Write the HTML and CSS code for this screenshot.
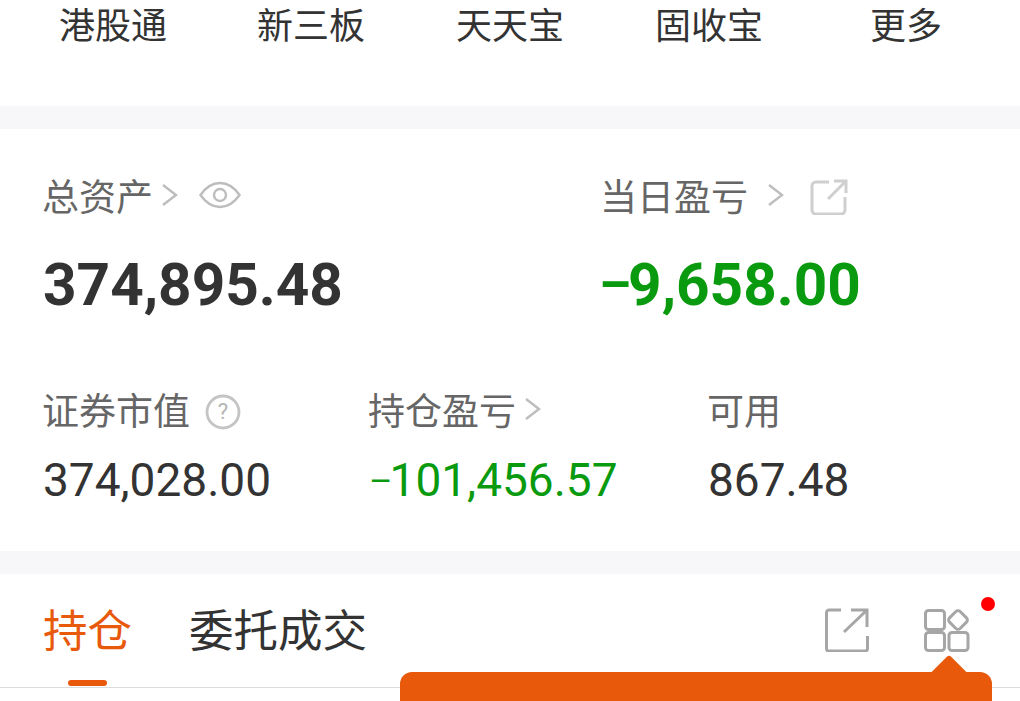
FILE: index.html
```html
<!DOCTYPE html>
<html lang="zh">
<head>
<meta charset="utf-8">
<title>持仓</title>
<link rel="stylesheet" href="styles.css">
</head>
<body>
<nav class="nav">
  <span class="nav-item">港股通</span>
  <span class="nav-item">新三板</span>
  <span class="nav-item">天天宝</span>
  <span class="nav-item">固收宝</span>
  <span class="nav-item">更多</span>
</nav>
<section class="summary">
  <div class="hero">
    <div class="hero-col">
      <div class="label-row">
        <span class="label">总资产</span>
        <svg class="chev" width="18" height="26" viewBox="0 0 18 26"><path d="M2 3l13 10L2 23" fill="none" stroke="#bdbdbd" stroke-width="2.400"/></svg>
        <svg class="eye" width="42" height="28" viewBox="0 0 42 28"><path d="M1.500 14C7 6 13.500 2 21 2s14 4 19.500 12C35 22 28.500 26 21 26S7 22 1.500 14z" fill="none" stroke="#bdbdbd" stroke-width="2.400"/><circle cx="21" cy="14" r="6" fill="none" stroke="#bdbdbd" stroke-width="2.400"/></svg>
      </div>
      <div class="big">374,895.48</div>
    </div>
    <div class="hero-col hero-right">
      <div class="label-row">
        <span class="label">当日盈亏</span>
        <svg class="chev chev-wide" width="18" height="26" viewBox="0 0 18 26"><path d="M2 3l13 10L2 23" fill="none" stroke="#bdbdbd" stroke-width="2.400"/></svg>
        <svg class="share" width="38" height="36" viewBox="0 0 38 36"><path d="M19 3H6a4 4 0 0 0-4 4v24a4 4 0 0 0 4 4h25a4 4 0 0 0 4-4V18" fill="none" stroke="#cfcfcf" stroke-width="3"/><path d="M18 20L35 3M24 2h12v12" fill="none" stroke="#cfcfcf" stroke-width="3"/></svg>
      </div>
      <div class="big green"><span class="dash">–</span>9,658.00</div>
    </div>
  </div>
  <div class="stats">
    <div class="stat stat-a">
      <div class="label-row">
        <span class="label">证券市值</span>
        <svg class="help" width="36" height="36" viewBox="0 0 36 36"><circle cx="18" cy="18" r="16" fill="none" stroke="#c4c4c4" stroke-width="2.800"/><text x="18" y="25" text-anchor="middle" class="help-q">?</text></svg>
      </div>
      <div class="mid">374,028.00</div>
    </div>
    <div class="stat stat-b">
      <div class="label-row">
        <span class="label">持仓盈亏</span>
        <svg class="chev" width="18" height="26" viewBox="0 0 18 26"><path d="M2 3l13 10L2 23" fill="none" stroke="#bdbdbd" stroke-width="2.400"/></svg>
      </div>
      <div class="mid green"><span class="dash">–</span>101,456.57</div>
    </div>
    <div class="stat">
      <div class="label-row">
        <span class="label">可用</span>
      </div>
      <div class="mid">867.48</div>
    </div>
  </div>
</section>
<section class="tabs">
  <div class="tab-list">
    <span class="tab tab-active">持仓</span>
    <span class="tab">委托成交</span>
  </div>
  <div class="tools">
    <svg width="44" height="44" viewBox="0 0 44 44"><path d="M16 2H4a2.500 2.500 0 0 0-2.500 2.500v36A2.500 2.500 0 0 0 4 43h36a2.500 2.500 0 0 0 2.500-2.500V28" fill="none" stroke="#a6a6a6" stroke-width="3"/><path d="M19 24L42 2M26 2h16v17" fill="none" stroke="#a6a6a6" stroke-width="3"/></svg>
    <span class="grid-tool">
      <svg width="46" height="44" viewBox="0 0 46 44"><g fill="none" stroke="#a6a6a6" stroke-width="3"><rect x="1.500" y="2.500" width="19" height="19" rx="3"/><rect x="1.500" y="24.500" width="19" height="18" rx="3"/><rect x="25" y="24.500" width="19" height="18" rx="3"/><rect x="26.500" y="4.500" width="15" height="15" rx="3" transform="rotate(45 34 12)"/></g></svg>
      <i class="dot"></i>
    </span>
  </div>
  <div class="tip"><i class="tip-arrow"></i></div>
</section>
</body>
</html>
```
FILE: styles.css
```css
* { box-sizing: border-box; }
html, body { margin: 0; padding: 0; }
body {
  width: 1020px;
  height: 701px;
  overflow: hidden;
  background: #f7f7f9;
  font-family: "Noto Sans CJK SC", "Noto Sans", sans-serif;
  color: #333;
}
.nav {
  height: 106px;
  background: #fff;
  display: grid;
  padding-left: 59px;
  grid-template-columns: 198px 199px 199px 215px auto;
  font-size: 36px;
  line-height: 46px;
  color: #333;
}
.nav-item { white-space: nowrap; }
.summary {
  margin-top: 23px;
  height: 422px;
  background: #fff;
  padding: 41px 0 0 43px;
}
.hero { display: flex; height: 214px; }
.hero-col { flex: none; width: 558px; }
.hero-right { flex: 1; width: auto; min-width: 0; }
.label-row {
  display: flex;
  align-items: center;
  height: 50px;
}
.label { font-size: 37px; line-height: 50px; color: #666; white-space: nowrap; margin-left: -1px; }
.chev { margin-left: 8px; }
.chev-wide { margin-left: 19px; }
.eye { margin-left: 20px; }
.share { margin-left: 25px; margin-top: 4px; }
.help { margin-left: 15px; margin-top: 6px; }
.big {
  font-family: Roboto, sans-serif;
  font-weight: 700;
  font-size: 58.500px;
  line-height: 66px;
  margin-top: 32px;
  color: #333;
  white-space: nowrap;
}
.mid {
  font-family: Roboto, sans-serif;
  font-size: 46px;
  line-height: 52px;
  margin-top: 20px;
  color: #333;
  white-space: nowrap;
}
.big.green, .mid.green { color: #0a9a0f; }
.dash { font-size: 0.87em; vertical-align: 0.06em; letter-spacing: -3px; margin-left: -2px; }
.mid .dash { font-size: 0.78em; vertical-align: 0.08em; letter-spacing: -3px; margin-left: 0; }
.help-q { font-family: Roboto, sans-serif; font-size: 22px; fill: #b5b5b5; }
.stats { display: flex; }
.stat-a { width: 326px; }
.stat-b { width: 339px; }
.tabs {
  position: relative;
  margin-top: 23px;
  height: 127px;
  background: #fff;
  display: flex;
  justify-content: space-between;
  padding: 23px 50px 0 43px;
}
.tabs::after {
  content: "";
  position: absolute;
  left: 0;
  right: 0;
  top: 113px;
  height: 1px;
  background: #dcdcdc;
}
.tab-list { display: flex; gap: 57px; }
.tab { font-size: 44.500px; line-height: 62px; color: #333; position: relative; white-space: nowrap; }
.tab-active { color: #e8590c; }
.tab-active::after {
  content: "";
  position: absolute;
  left: 25px;
  top: 83px;
  width: 39px;
  height: 6px;
  border-radius: 3px;
  background: #e8590c;
}
.tools { display: flex; gap: 55px; padding-top: 11px; align-items: flex-start; }
.grid-tool { position: relative; display: block; }
.dot {
  position: absolute;
  left: 57px;
  top: -11px;
  width: 14px;
  height: 14px;
  border-radius: 50%;
  background: #f00;
}
.tip {
  position: absolute;
  z-index: 1;
  left: 400px;
  top: 98px;
  width: 592px;
  height: 29px;
  background: #e8590c;
  border-radius: 12px 12px 0 0;
}
.tip-arrow {
  position: absolute;
  left: 536px;
  top: -12px;
  width: 26px;
  height: 26px;
  background: #e8590c;
  transform: rotate(45deg);
  border-radius: 3px 0 0 0;
}
```
